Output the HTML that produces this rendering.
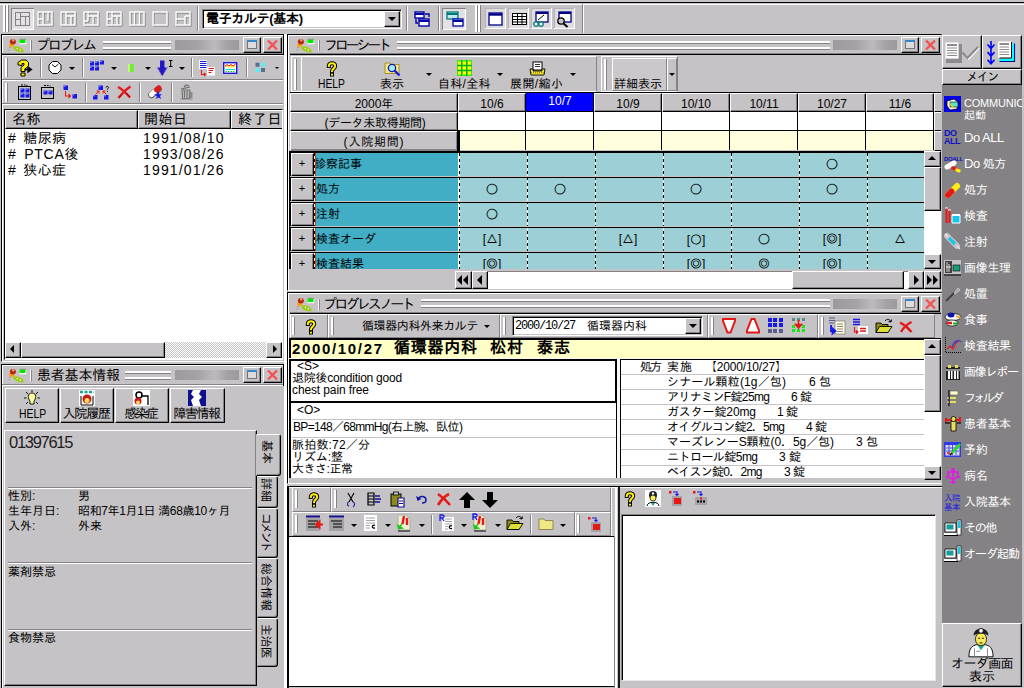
<!DOCTYPE html>
<html lang="ja">
<head>
<meta charset="utf-8">
<title>電子カルテ(基本)</title>
<style>
html,body{margin:0;padding:0;}
body{width:1024px;height:688px;overflow:hidden;background:#c6c3c6;position:relative;
 font-family:"Liberation Sans","IPAGothic",sans-serif;font-size:13px;color:#000;line-height:1;}
div,span{box-sizing:border-box;}
.a{position:absolute;}
.t{position:absolute;white-space:nowrap;}
.g{background:#c6c3c6;}
.rs{box-shadow:inset 1px 1px #fff,inset -1px -1px #848284;}
.sk{box-shadow:inset 1px 1px #848284,inset -1px -1px #fff;}
.btn{border:1px solid;border-color:#fff #000 #000 #fff;box-shadow:inset -1px -1px #848284;background:#c6c3c6;}
.hd{border:1px solid;border-color:#fff #000 #000 #fff;box-shadow:inset -1px -1px #848284;background:#c6c3c6;}
.grip{width:3px;border-left:2px solid #fff;border-right:1px solid #848284;}
.sep{width:2px;border-left:1px solid #848284;border-right:1px solid #fff;}
.hl{height:2px;border-top:1px solid #848284;border-bottom:1px solid #fff;}
.dd{width:0;height:0;border-left:3px solid transparent;border-right:3px solid transparent;border-top:3px solid #000;}
.w{background:#fff;}
.k{background:#000;}
svg{position:absolute;overflow:visible;}
</style>
</head>
<body>
<!-- ===== frame top ===== -->
<div class="a k" style="left:0;top:2px;width:1024px;height:1px"></div>
<div class="a w" style="left:0;top:4px;width:1024px;height:1px"></div>

<!-- ===== top toolbar ===== -->
<div class="a" style="left:0;top:4px;width:583px;height:29px;border-right:1px solid #848284;"></div>
<div class="a w" style="left:583px;top:4px;width:1px;height:29px"></div>
<div class="a grip" style="left:3px;top:5px;height:27px"></div>
<div class="a grip" style="left:6px;top:5px;height:27px"></div>
<div class="a sk" style="left:11px;top:8px;width:23px;height:22px;background:#e3e1e3;"></div>
<svg style="left:14px;top:11px" width="176" height="16" viewBox="0 0 176 16" fill="none" stroke="#848284" stroke-width="1">
 <g><rect x="1.5" y="1.5" width="14" height="13"/><path d="M6.5 1.5v13M11.5 5v9M1.5 8.5h5M6.5 5.5h9"/></g>
 <g stroke="#848284" stroke-width="1.2" transform="translate(1,1)">
 <g transform="translate(23,0)"><rect x="1" y="1" width="14" height="13"/><path d="M6 1v13M11 1v9M1 8h5"/></g>
 <g transform="translate(46,0)"><rect x="1" y="1" width="14" height="13"/><path d="M6 1v13M11 5v9M6 5h9"/></g>
 <g transform="translate(69,0)"><rect x="1" y="1" width="14" height="13"/><path d="M5 1v9M10 5v9M5 5h10M1 10h4"/></g>
 <g transform="translate(92,0)"><rect x="1" y="1" width="14" height="13"/><path d="M6 1v13M11 5v9M1 8h5M6 5h9"/></g>
 <g transform="translate(115,0)"><rect x="1" y="1" width="14" height="13"/><path d="M5.5 1v13M10.5 1v13"/></g>
 <g transform="translate(138,0)"><rect x="1" y="1" width="14" height="13"/></g>
 <g transform="translate(161,0)"><rect x="1" y="1" width="14" height="13"/><path d="M1 8h9M10 5v9M10 5h5"/></g>
 </g>
 <g stroke="#fff" stroke-width="1.400">
 <g transform="translate(23,0)"><rect x="1" y="1" width="14" height="13"/><path d="M6 1v13M11 1v9M1 8h5"/></g>
 <g transform="translate(46,0)"><rect x="1" y="1" width="14" height="13"/><path d="M6 1v13M11 5v9M6 5h9"/></g>
 <g transform="translate(69,0)"><rect x="1" y="1" width="14" height="13"/><path d="M5 1v9M10 5v9M5 5h10M1 10h4"/></g>
 <g transform="translate(92,0)"><rect x="1" y="1" width="14" height="13"/><path d="M6 1v13M11 5v9M1 8h5M6 5h9"/></g>
 <g transform="translate(115,0)"><rect x="1" y="1" width="14" height="13"/><path d="M5.5 1v13M10.5 1v13"/></g>
 <g transform="translate(138,0)"><rect x="1" y="1" width="14" height="13"/></g>
 <g transform="translate(161,0)"><rect x="1" y="1" width="14" height="13"/><path d="M1 8h9M10 5v9M10 5h5"/></g>
 </g>
</svg>
<div class="a sep" style="left:197px;top:6px;height:25px"></div>
<!-- combo -->
<div class="a" style="left:202px;top:9px;width:200px;height:20px;background:#fff;border:1px solid;border-color:#848284 #fff #fff #848284;box-shadow:inset 1px 1px #000,inset -1px -1px #c6c3c6;"></div>
<span class="t" style="left:206px;top:12px;font-size:13px;font-weight:bold;letter-spacing:-0.33px">電子カルテ(基本)</span>
<div class="a btn" style="left:384px;top:11px;width:16px;height:16px"></div>
<div class="a dd" style="left:388px;top:17px;border-left-width:4px;border-right-width:4px;border-top-width:4px"></div>
<div class="a sep" style="left:406px;top:6px;height:25px"></div>
<svg style="left:413px;top:10px" width="18" height="18" viewBox="0 0 18 18" fill="#fff" stroke="#0000a5" stroke-width="1.4">
 <rect x="2" y="2" width="9" height="6"/><rect x="6" y="9" width="10" height="7"/><path d="M2 4h9M6 11h10" stroke-width="2"/><path d="M12 4h4v3M3 9v4h2" fill="none"/>
</svg>
<div class="a sep" style="left:438px;top:6px;height:25px"></div>
<div class="a sk" style="left:442px;top:8px;width:24px;height:22px;background:#e3e1e3;"></div>
<svg style="left:446px;top:11px" width="18" height="16" viewBox="0 0 18 16" fill="#c6e7e7" stroke="#007b7b" stroke-width="1.3">
 <rect x="1" y="1" width="11" height="7"/><rect x="7" y="8" width="10" height="7" stroke="#0000a5" fill="#fff"/><path d="M1 3h11" stroke-width="2"/><path d="M7 10h10" stroke="#0000a5" stroke-width="2"/>
</svg>
<div class="a grip" style="left:475px;top:5px;height:27px"></div>
<div class="a grip" style="left:478px;top:5px;height:27px"></div>
<div class="a" style="left:485px;top:8px;width:21px;height:21px;background:#e0dde0;box-shadow:inset -1px -1px #fff,inset 1px 1px #b5b2b5"></div>
<div class="a" style="left:508px;top:8px;width:21px;height:21px;background:#e0dde0;box-shadow:inset -1px -1px #fff,inset 1px 1px #b5b2b5"></div>
<div class="a" style="left:531px;top:8px;width:21px;height:21px;background:#e0dde0;box-shadow:inset -1px -1px #fff,inset 1px 1px #b5b2b5"></div>
<div class="a" style="left:554px;top:8px;width:21px;height:21px;background:#e0dde0;box-shadow:inset -1px -1px #fff,inset 1px 1px #b5b2b5"></div>
<svg style="left:484px;top:8px" width="92" height="22" viewBox="0 0 92 22" fill="#fff" stroke="#000084" stroke-width="1.3">
 <rect x="5" y="5" width="13" height="12"/><path d="M5 6.5h13" stroke-width="2.4"/>
 <g stroke="#000" stroke-width="1"><rect x="28.500" y="5.500" width="14" height="11"/><path d="M28.500 8.500h14M28.500 11.500h14M28.500 14h14M33.500 5.500v11M38 5.500v11"/></g>
 <g transform="translate(46,0)"><rect x="6" y="4" width="12" height="10"/><path d="M6 5h12" stroke-width="2"/><circle cx="6" cy="16" r="2.200" stroke="#007b7b"/><circle cx="11" cy="16" r="2.200" stroke="#007b7b"/><path d="M8 12l6-5" stroke="#000" stroke-width="1"/></g>
 <g transform="translate(69,0)"><rect x="6" y="4" width="12" height="10"/><path d="M6 5h12" stroke-width="2"/><circle cx="8" cy="13" r="3.200" stroke="#000" fill="#c6c3c6"/><path d="M10.500 15.500l4 3.500" stroke="#000" stroke-width="2"/></g>
</svg>
<!-- ===== problem panel ===== -->
<div class="a" style="left:1px;top:34px;width:283px;height:328px;border:1px solid;border-color:#000 #c6c3c6 #fff #000;box-shadow:inset 1px 1px #fff;"></div><div class="a k" style="left:283px;top:34px;width:1px;height:21px"></div><div class="a w" style="left:284px;top:34px;width:3px;height:654px"></div>
<div class="a" style="left:2px;top:53px;width:281px;height:2px;border-top:1px solid #848284;border-bottom:1px solid #000;"></div>
<!-- title -->
<svg style="left:8px;top:37px" width="20" height="17" viewBox="8 37 20 17"><rect x="19.500" y="39.500" width="6.800" height="4.700" fill="#fff"/><rect x="19.500" y="39.500" width="6" height="3.500" fill="#00e700"/><path d="M19.500 39.300h6.500" stroke="#737573" stroke-width=".7"/><ellipse cx="11.600" cy="45" rx="2.500" ry="2.100" fill="#ff9c00"/><ellipse cx="12.900" cy="41.700" rx="3" ry="2.700" fill="#b52810"/><circle cx="13.200" cy="40.200" r="1.200" fill="#e7a56b"/><ellipse cx="18.500" cy="49.300" rx="5.600" ry="2.500" transform="rotate(22 18.500 49.300)" fill="#9cce18"/><circle cx="17.300" cy="48.600" r=".7" fill="#fff"/><circle cx="20.300" cy="49.900" r=".7" fill="#fff"/><path d="M10 47.300l-1.500 5" stroke="#fff" stroke-width="1"/><path d="M10 47.300l-1.500 5" stroke="#424142" stroke-width="1" stroke-dasharray="1.200 1.200"/></svg>
<div class="a w" style="left:30px;top:40px;width:1px;height:11px;"></div><div class="a" style="left:31px;top:40px;width:1px;height:11px;background:#848284"></div>
<span class="t" style="left:36px;top:38px;font-size:14px;letter-spacing:-2.25px">プロブレム</span>
<div class="a" style="left:103px;top:41px;width:68px;height:9px;background:linear-gradient(#fff 0,#fff 2px,#848284 2px,#848284 3px,#c6c3c6 3px,#c6c3c6 6px,#fff 6px,#fff 8px,#848284 8px,#848284 9px);"></div>
<div class="a" style="left:175px;top:40px;width:64px;height:10px;background:linear-gradient(90deg,#9c9a9c 0,#a5a2a5 35%,#bdbabd 62%,#a5a2a5 82%,#9c9a9c 100%);"></div>
<div class="a btn" style="left:243px;top:37px;width:18px;height:16px"></div>
<div class="a" style="left:247px;top:40px;width:10px;height:9px;border:1px solid #737573;border-top:2px solid #3186ce;background:#dedbde"></div>
<div class="a btn" style="left:263px;top:37px;width:19px;height:16px"></div>
<svg style="left:266px;top:39px" width="13" height="12" viewBox="0 0 13 12"><path d="M2 1.500l9 9M11 1.500l-9 9" stroke="#f75152" stroke-width="2.400"/></svg>
<!-- toolbar 1 -->
<div class="a" style="left:2px;top:55px;width:281px;height:25px;border-top:1px solid #fff;border-bottom:1px solid #848284;"></div>
<div class="a" style="left:2px;top:80px;width:281px;height:24px;border-top:1px solid #fff;border-bottom:1px solid #848284;"></div><div class="a w" style="left:2px;top:104px;width:281px;height:1px"></div>
<div class="a grip" style="left:5px;top:58px;height:19px"></div>
<div class="a grip" style="left:5px;top:83px;height:19px"></div>
<div class="a sep" style="left:40px;top:58px;height:19px"></div>
<div class="a sep" style="left:82px;top:58px;height:19px"></div>
<div class="a sep" style="left:191px;top:58px;height:19px"></div>
<div class="a sep" style="left:246px;top:58px;height:19px"></div>
<div class="a sep" style="left:85px;top:83px;height:19px"></div>
<div class="a sep" style="left:139px;top:83px;height:19px"></div>
<div class="a sep" style="left:171px;top:83px;height:19px"></div>
<div class="a dd" style="left:69px;top:67px"></div>
<div class="a dd" style="left:111px;top:67px"></div>
<div class="a dd" style="left:145px;top:67px"></div>
<div class="a dd" style="left:179px;top:67px"></div>
<div class="a dd" style="left:275px;top:67px;border-left-width:2px;border-right-width:2px;border-top-width:2px"></div>
<svg style="left:0;top:55px" width="284" height="50" viewBox="0 55 284 50">
<path d="M18 65v-2.500l3.500-2.500h4.500l2.500 2.500v3.500l-3.500 3v2.500h-4v-4l3-2.500v-1.500h-2v2zM21 73h4v3h-4z" fill="#ffef00" stroke="#000" stroke-width="1" stroke-linejoin="round"/>
<path d="M24.500 69.500h5M28 67l3.500 2.500-3.500 2.500z" stroke="#000" stroke-width="1.300" fill="#000"/>
<path d="M52.500 61.500h5l3.500 3.500v5l-3.500 3.500h-5l-3.500-3.500v-5z" fill="#fff" stroke="#000" stroke-width="1"/><path d="M52 64.500l3 2.500 3.500-3" stroke="#000" stroke-width=".9" fill="none"/><path d="M54 73.500h3" stroke="#000"/>
<rect x="90" y="61.5" width="4" height="4" fill="#1818e7"/><rect x="90" y="61.5" width="2" height="1.500" fill="#6b79f7"/><rect x="95" y="61.5" width="4" height="4" fill="#1818e7"/><rect x="95" y="61.5" width="2" height="1.500" fill="#6b79f7"/><rect x="100" y="60.5" width="4" height="4" fill="#1818e7"/><rect x="100" y="60.5" width="2" height="1.500" fill="#6b79f7"/><rect x="90" y="66.5" width="4" height="4" fill="#1818e7"/><rect x="90" y="66.5" width="2" height="1.500" fill="#6b79f7"/><rect x="95" y="66.5" width="4" height="4" fill="#1818e7"/><rect x="95" y="66.5" width="2" height="1.500" fill="#6b79f7"/>
<rect x="128" y="64" width="6" height="8" fill="#7be739"/><rect x="128" y="64" width="2" height="8" fill="#bdf77b"/>
<path d="M160 60.500h4.500v7h2.500l-4.750 8.500-4.750-8.500h2.500z" fill="#2118c6"/><path d="M157 67.500l5 8.500M167.500 67.500l-5 8.500" stroke="#7349b5" stroke-width="1" stroke-dasharray="1 1"/><path d="M169 60.500h3.500M170.700 60.500v6M169 66.500h3.500" stroke="#000" stroke-width="1"/>
<rect x="199" y="60" width="8" height="9" fill="#fff"/><path d="M200 61.500h6.500M200 63.500h6.500M200 65.500h6.500M200 67.500h6.500" stroke="#1818e7" stroke-width="1.100"/><rect x="207" y="67" width="8" height="8.500" fill="#fff"/><path d="M208.500 68.500h5.500M208.500 70.500h4.500M208.500 72.500h3" stroke="#e71818" stroke-width="1.100"/><path d="M201.500 70v4.500h4M204 73l1.500 1.500-1.500 1.500" stroke="#e71818" stroke-width="1.100" fill="none"/>
<rect x="223.700" y="62.700" width="13" height="10.600" fill="#fff" stroke="#1818e7" stroke-width="1.400"/><path d="M225 66l2-1.500 2 1.500 2-1.500 2 1.500 2.500-2v3.500h-10.500z" fill="#ffe75a"/><path d="M225 66l2-1.500 2 1.500 2-1.500 2 1.500 2.500-2" stroke="#e71818" fill="none" stroke-width="1"/><path d="M225.500 69.500h9.500" stroke="#18d6d6" stroke-width="1.200"/><path d="M225.500 71.500h9.500" stroke="#18c618" stroke-width="1" stroke-dasharray="1.500 1"/>
<rect x="255.500" y="62.700" width="4" height="4" fill="#5a6d8c"/><rect x="261" y="62.700" width="4" height="4" fill="#5aeff7"/><rect x="255.500" y="68" width="4" height="4" fill="#5aeff7"/><rect x="261" y="68" width="4" height="4" fill="#5a6d8c"/>
<rect x="18.500" y="86.500" width="12" height="13" fill="none" stroke="#000" stroke-width="1"/><path d="M21 85h2M24 85h1.500M26.500 85.500h1" stroke="#000" stroke-width="1.200"/><rect x="20.5" y="88.5" width="4" height="4" fill="#1818e7"/><rect x="20.5" y="88.5" width="2" height="1.500" fill="#6b79f7"/><rect x="25.5" y="88.5" width="4" height="4" fill="#1818e7"/><rect x="25.5" y="88.5" width="2" height="1.500" fill="#6b79f7"/><rect x="20.5" y="93.5" width="4" height="4" fill="#1818e7"/><rect x="20.5" y="93.5" width="2" height="1.500" fill="#6b79f7"/><rect x="25.5" y="93.5" width="4" height="4" fill="#1818e7"/><rect x="25.5" y="93.5" width="2" height="1.500" fill="#6b79f7"/>
<rect x="41.500" y="87.500" width="12" height="11" fill="none" stroke="#000" stroke-width="1"/><path d="M44 85.500h2M47 85.500h1.500M49.500 86h1" stroke="#000" stroke-width="1.200"/><rect x="43.5" y="90.5" width="4" height="4" fill="#1818e7"/><rect x="43.5" y="90.5" width="2" height="1.500" fill="#6b79f7"/><rect x="48.5" y="90.5" width="4" height="4" fill="#1818e7"/><rect x="48.5" y="90.5" width="2" height="1.500" fill="#6b79f7"/>
<rect x="63.5" y="85.5" width="4.5" height="4.5" fill="#1818e7"/><rect x="63.5" y="85.5" width="2" height="1.500" fill="#6b79f7"/><rect x="72.5" y="94" width="4.5" height="4.5" fill="#1818e7"/><rect x="72.5" y="94" width="2" height="1.500" fill="#6b79f7"/><path d="M65.500 91v5h5M68.500 94l2 2-2 2" stroke="#e71818" stroke-width="1.100" fill="none"/>
<rect x="98.5" y="85.5" width="4.5" height="4.5" fill="#1818e7"/><rect x="98.5" y="85.5" width="2" height="1.500" fill="#6b79f7"/><rect x="93" y="95" width="4.5" height="4.5" fill="#1818e7"/><rect x="93" y="95" width="2" height="1.500" fill="#6b79f7"/><rect x="104" y="95" width="4.5" height="4.5" fill="#1818e7"/><rect x="104" y="95" width="2" height="1.500" fill="#6b79f7"/><path d="M95.500 94.500l3.500-3.500M96.500 91h2.500v2.500M106.500 94.500l-3.500-3.500M105.500 91h-2.500v2.500" stroke="#e71818" stroke-width="1" fill="none"/><path d="M106 87.500c0-1.500 2.500-1.500 2.500 0c0 1-1.200 1-1.200 2.200M107.300 91v1" stroke="#000" stroke-width=".9" fill="none"/>
<path d="M118 87c3 1.500 8 6 12 10.500M130.500 86.500c-4 2.500-8 6.500-12 11.500" stroke="#e71818" stroke-width="2.400" fill="none"/><path d="M119 97.500l3-3M126 93l4 4" stroke="#7b0000" stroke-width=".8"/>
<path d="M151.500 95l7-6" stroke="#5a5d5a" stroke-width="6.500" stroke-linecap="round"/><path d="M151.500 94.500l3.500-3" stroke="#fff" stroke-width="5" stroke-linecap="round"/><path d="M156.500 90l2.500-2" stroke="#e71818" stroke-width="5" stroke-linecap="round"/><path d="M158 91l-1.500 3.500-2.500-.5 3 2.500-1.500 2.500 3-1.500 2.500 1.500-1-3 2-2-2.500.5z" fill="#1818e7"/>
<path d="M182 90h8l-.500 8.500h-7z" fill="#b5b2b5" stroke="#6b6d6b" stroke-width="1"/><path d="M181 89l9-2M184 87l2-2 3 1" stroke="#6b6d6b" stroke-width="1.200" fill="none"/><path d="M184.500 91v6.500M187 91v6.500" stroke="#6b6d6b" stroke-width=".9"/><path d="M190 92h2.500v6h-2.500z" fill="#8c8a8c"/><path d="M180.500 99h12" stroke="#848284"/>
</svg>
<!-- list -->
<div class="a" style="left:4px;top:109px;width:279px;height:251px;background:#fff;border:1px solid;border-color:#000 #fff #fff #000;"></div>
<div class="a hd" style="left:5px;top:110px;width:133px;height:19px"></div>
<div class="a hd" style="left:138px;top:110px;width:93px;height:19px"></div>
<div class="a hd" style="left:231px;top:110px;width:51px;height:19px;border-right:0;box-shadow:none"></div>
<span class="t" style="left:12px;top:112px;font-size:14px;letter-spacing:0.5px">名称</span>
<span class="t" style="left:144px;top:112px;font-size:14px;letter-spacing:0.5px">開始日</span>
<span class="t" style="left:238px;top:112px;font-size:14px;letter-spacing:0.75px">終了日</span>
<span class="t" style="left:8px;top:131px;font-size:14px;word-spacing:3px;letter-spacing:0.33px"># 糖尿病</span>
<span class="t" style="left:8px;top:147px;font-size:14px;word-spacing:3px;letter-spacing:0.75px"># PTCA後</span>
<span class="t" style="left:8px;top:163px;font-size:14px;word-spacing:3px;letter-spacing:0.33px"># 狭心症</span>
<span class="t" style="left:143px;top:131px;font-size:14px;letter-spacing:1.16px">1991/08/10</span>
<span class="t" style="left:143px;top:147px;font-size:14px;letter-spacing:1.16px">1993/08/26</span>
<span class="t" style="left:143px;top:163px;font-size:14px;letter-spacing:1.16px">1991/01/26</span>
<!-- hscroll -->
<div class="a" style="left:5px;top:342px;width:277px;height:16px;background:repeating-conic-gradient(#fff 0 25%,#c6c3c6 0 50%) 0 0/2px 2px;"></div>
<div class="a btn" style="left:5px;top:342px;width:16px;height:16px"></div>
<div class="a btn" style="left:21px;top:342px;width:144px;height:16px"></div>
<div class="a btn" style="left:266px;top:342px;width:16px;height:16px"></div>
<div class="a" style="left:10px;top:345px;width:0;height:0;border-top:4px solid transparent;border-bottom:4px solid transparent;border-right:4px solid #000"></div>
<div class="a" style="left:273px;top:345px;width:0;height:0;border-top:4px solid transparent;border-bottom:4px solid transparent;border-left:4px solid #000"></div>
<!-- ===== patient panel ===== -->
<div class="a" style="left:1px;top:364px;width:283px;height:326px;border:1px solid;border-color:#000 #c6c3c6 #fff #000;box-shadow:inset 1px 1px #fff;"></div><div class="a k" style="left:283px;top:364px;width:1px;height:22px"></div>
<div class="a" style="left:2px;top:384px;width:281px;height:2px;border-top:1px solid #848284;border-bottom:1px solid #fff;"></div>
<svg style="left:8px;top:367px" width="20" height="17" viewBox="8 37 20 17"><rect x="19.500" y="39.500" width="6.800" height="4.700" fill="#fff"/><rect x="19.500" y="39.500" width="6" height="3.500" fill="#00e700"/><path d="M19.500 39.300h6.500" stroke="#737573" stroke-width=".7"/><ellipse cx="11.600" cy="45" rx="2.500" ry="2.100" fill="#ff9c00"/><ellipse cx="12.900" cy="41.700" rx="3" ry="2.700" fill="#b52810"/><circle cx="13.200" cy="40.200" r="1.200" fill="#e7a56b"/><ellipse cx="18.500" cy="49.300" rx="5.600" ry="2.500" transform="rotate(22 18.500 49.300)" fill="#9cce18"/><circle cx="17.300" cy="48.600" r=".7" fill="#fff"/><circle cx="20.300" cy="49.900" r=".7" fill="#fff"/><path d="M10 47.300l-1.500 5" stroke="#fff" stroke-width="1"/><path d="M10 47.300l-1.500 5" stroke="#424142" stroke-width="1" stroke-dasharray="1.200 1.200"/></svg>
<div class="a w" style="left:30px;top:370px;width:1px;height:11px;"></div><div class="a" style="left:31px;top:370px;width:1px;height:11px;background:#848284"></div>
<span class="t" style="left:37px;top:368px;font-size:14px;letter-spacing:-0.2px">患者基本情報</span>
<div class="a" style="left:125px;top:371px;width:46px;height:9px;background:linear-gradient(#fff 0,#fff 2px,#848284 2px,#848284 3px,#c6c3c6 3px,#c6c3c6 6px,#fff 6px,#fff 8px,#848284 8px,#848284 9px);"></div>
<div class="a" style="left:175px;top:370px;width:64px;height:10px;background:linear-gradient(90deg,#9c9a9c 0,#a5a2a5 35%,#bdbabd 62%,#a5a2a5 82%,#9c9a9c 100%);"></div>
<div class="a btn" style="left:243px;top:367px;width:18px;height:16px"></div>
<div class="a" style="left:247px;top:370px;width:10px;height:9px;border:1px solid #737573;border-top:2px solid #3186ce;background:#dedbde"></div>
<div class="a btn" style="left:263px;top:367px;width:19px;height:16px"></div>
<svg style="left:266px;top:369px" width="13" height="12" viewBox="0 0 13 12"><path d="M2 1.500l9 9M11 1.500l-9 9" stroke="#f75152" stroke-width="2.400"/></svg>
<!-- 4 buttons -->
<div class="a btn" style="left:5px;top:388px;width:54px;height:35px"></div>
<div class="a btn" style="left:60px;top:388px;width:54px;height:35px"></div>
<div class="a btn" style="left:115px;top:388px;width:54px;height:35px"></div>
<div class="a btn" style="left:170px;top:388px;width:55px;height:35px"></div>
<span class="t" style="left:18.600px;top:407px;font-size:13px;transform:scaleX(.8);transform-origin:0 0">HELP</span>
<span class="t" style="left:62.4px;top:407px;font-size:13px;letter-spacing:-1.13px">入院履歴</span>
<span class="t" style="left:124.3px;top:407px;font-size:13px;letter-spacing:-2.3px">感染症</span>
<span class="t" style="left:173.5px;top:407px;font-size:13px;letter-spacing:-1.5px">障害情報</span>
<svg style="left:24px;top:390px" width="16" height="17" viewBox="0 0 16 17"><path d="M8 3c-5 0-4 6-2 8v3h4v-3c2-2 3-8-2-8z" fill="#ffff9c" stroke="#000" stroke-width=".9"/><path d="M8 0v2M2 2l2 2M14 2l-2 2M0 8h2.500M16 8h-2.500M2 14l2-2M14 14l-2-2" stroke="#000" stroke-width=".9"/></svg>
<svg style="left:79px;top:390px" width="16" height="16" viewBox="0 0 16 16"><rect x="0" y="0" width="16" height="16" fill="#fff"/><path d="M1 2h14" stroke="#18a58c" stroke-width="2.500" stroke-dasharray="3 1.500"/><circle cx="8" cy="9" r="4.500" fill="#c61818"/><circle cx="8" cy="10.500" r="2.500" fill="#ffde5a"/><path d="M2 6v9M14 6v9M2 15h12" stroke="#000" fill="none"/></svg>
<svg style="left:133px;top:390px" width="18" height="16" viewBox="0 0 18 16"><rect x="0" y="0" width="17" height="16" fill="#fff"/><circle cx="6" cy="5" r="3" fill="none" stroke="#000" stroke-width="1.500"/><path d="M8 6h7v9" stroke="#000" stroke-width="1.300" fill="none"/><circle cx="5" cy="11" r="3.500" fill="#c61818"/><circle cx="5" cy="12.500" r="2" fill="#ffde5a"/></svg>
<svg style="left:188px;top:390px" width="18" height="16" viewBox="0 0 18 16"><path d="M0 0h18v16h-18z" fill="#fff"/><path d="M0 0h5l-2 4 3 3-3 3 2 6h-5zM18 0h-5l-2 4 3 3-3 3 2 6h5z" fill="#10108c"/></svg>
<!-- content -->
<div class="a" style="left:4px;top:430px;width:253px;height:256px;border:1px solid;border-color:#fff #000 #000 #fff;box-shadow:inset -1px -1px #848284;"></div>
<span class="t" style="left:9px;top:434px;font-size:16.500px;letter-spacing:-1.3px;color:#212021">01397615</span>
<div class="a hl" style="left:8px;top:487px;width:244px"></div>
<span class="t" style="left:8px;top:490px;font-size:12px;">性別:</span><span class="t" style="left:78px;top:490px;font-size:12px;">男</span>
<span class="t" style="left:8px;top:505px;font-size:12px;">生年月日:</span><span class="t" style="left:78px;top:505px;font-size:12px;letter-spacing:-.35px">昭和7年1月1日 満68歳10ヶ月</span>
<span class="t" style="left:8px;top:520px;font-size:12px;">入外:</span><span class="t" style="left:78px;top:520px;font-size:12px;">外来</span>
<div class="a hl" style="left:8px;top:562px;width:244px"></div>
<span class="t" style="left:8px;top:566px;font-size:12px;">薬剤禁忌</span>
<div class="a hl" style="left:8px;top:629px;width:244px"></div>
<span class="t" style="left:8px;top:632px;font-size:12px;">食物禁忌</span>
<!-- tabs -->
<div class="a" style="left:256px;top:434px;width:25px;height:42px;background:#c6c3c6;border:1px solid;border-color:#fff #000 #000 #c6c3c6;border-radius:0 3px 3px 0;box-shadow:inset -1px -1px #848284"></div>
<div class="a" style="left:257px;top:476px;width:21px;height:32px;border:1px solid;border-color:#fff #000 #000 transparent;border-radius:0 3px 3px 0;box-shadow:inset -1px -1px #848284"></div>
<div class="a" style="left:257px;top:508px;width:21px;height:50px;border:1px solid;border-color:#fff #000 #000 transparent;border-radius:0 3px 3px 0;box-shadow:inset -1px -1px #848284"></div>
<div class="a" style="left:257px;top:558px;width:21px;height:60px;border:1px solid;border-color:#fff #000 #000 transparent;border-radius:0 3px 3px 0;box-shadow:inset -1px -1px #848284"></div>
<div class="a" style="left:257px;top:618px;width:21px;height:49px;border:1px solid;border-color:#fff #000 #000 transparent;border-radius:0 3px 3px 0;box-shadow:inset -1px -1px #848284"></div>
<span class="t" style="left:261px;top:440px;font-size:12px;writing-mode:vertical-rl;text-orientation:sideways;letter-spacing:0px">基本</span>
<span class="t" style="left:260px;top:478px;font-size:12px;writing-mode:vertical-rl;text-orientation:sideways;letter-spacing:0px">詳細</span>
<span class="t" style="left:260px;top:513px;font-size:12px;writing-mode:vertical-rl;text-orientation:sideways;letter-spacing:-2.8px">コメント</span>
<span class="t" style="left:260px;top:563px;font-size:12px;writing-mode:vertical-rl;text-orientation:sideways;letter-spacing:0px">総合情報</span>
<span class="t" style="left:260px;top:624px;font-size:12px;writing-mode:vertical-rl;text-orientation:sideways;letter-spacing:-0.6px">主治医</span>
<!-- ===== flow sheet panel ===== -->
<div class="a" style="left:287px;top:34px;width:655px;height:257px;border:1px solid;border-color:#000 #c6c3c6 #fff #000;box-shadow:inset 1px 1px #fff;"></div>
<div class="a" style="left:290px;top:53px;width:651px;height:2px;border-top:1px solid #848284;border-bottom:1px solid #000;"></div>
<svg style="left:296px;top:37px" width="20" height="17" viewBox="8 37 20 17"><rect x="19.500" y="39.500" width="6.800" height="4.700" fill="#fff"/><rect x="19.500" y="39.500" width="6" height="3.500" fill="#00e700"/><path d="M19.500 39.300h6.500" stroke="#737573" stroke-width=".7"/><ellipse cx="11.600" cy="45" rx="2.500" ry="2.100" fill="#ff9c00"/><ellipse cx="12.900" cy="41.700" rx="3" ry="2.700" fill="#b52810"/><circle cx="13.200" cy="40.200" r="1.200" fill="#e7a56b"/><ellipse cx="18.500" cy="49.300" rx="5.600" ry="2.500" transform="rotate(22 18.500 49.300)" fill="#9cce18"/><circle cx="17.300" cy="48.600" r=".7" fill="#fff"/><circle cx="20.300" cy="49.900" r=".7" fill="#fff"/><path d="M10 47.300l-1.500 5" stroke="#fff" stroke-width="1"/><path d="M10 47.300l-1.500 5" stroke="#424142" stroke-width="1" stroke-dasharray="1.200 1.200"/></svg>
<div class="a w" style="left:318px;top:40px;width:1px;height:11px;"></div><div class="a" style="left:319px;top:40px;width:1px;height:11px;background:#848284"></div>
<span class="t" style="left:324px;top:38px;font-size:14px;letter-spacing:-3.2px">フローシート</span>
<div class="a" style="left:397px;top:41px;width:433px;height:9px;background:linear-gradient(#fff 0,#fff 2px,#848284 2px,#848284 3px,#c6c3c6 3px,#c6c3c6 6px,#fff 6px,#fff 8px,#848284 8px,#848284 9px);"></div>
<div class="a" style="left:833px;top:40px;width:64px;height:10px;background:linear-gradient(90deg,#9c9a9c 0,#a5a2a5 35%,#bdbabd 62%,#a5a2a5 82%,#9c9a9c 100%);"></div>
<div class="a btn" style="left:901px;top:37px;width:18px;height:16px"></div>
<div class="a" style="left:905px;top:40px;width:10px;height:9px;border:1px solid #737573;border-top:2px solid #3186ce;background:#dedbde"></div>
<div class="a btn" style="left:921px;top:37px;width:19px;height:16px"></div>
<svg style="left:924px;top:39px" width="13" height="12" viewBox="0 0 13 12"><path d="M2 1.500l9 9M11 1.500l-9 9" stroke="#f75152" stroke-width="2.400"/></svg>
<div class="a" style="left:291px;top:56px;width:306px;height:36px;border:1px solid;border-color:#fff #848284 #fff #fff;"></div>
<div class="a" style="left:601px;top:56px;width:77px;height:36px;border:1px solid;border-color:#fff #848284 #fff #fff;"></div><div class="a k" style="left:290px;top:92px;width:651px;height:1px"></div>
<div class="a grip" style="left:294px;top:59px;height:31px"></div><div class="a w" style="left:301px;top:57px;width:1px;height:34px"></div>
<div class="a grip" style="left:604px;top:59px;height:31px"></div>
<div class="a" style="left:612px;top:58px;width:55px;height:33px;background:#cbc8cb;border:1px solid;border-color:#fff #848284 #848284 #fff"></div><div class="a" style="left:667px;top:58px;width:10px;height:33px;border:1px solid;border-color:#fff #848284 #848284 #fff"></div>
<svg style="left:326px;top:61px" width="12" height="16" viewBox="0 0 12 16"><path d="M2.800 5c0-3.800 6.400-3.800 6.400 0c0 2.600-3.200 2.600-3.200 5.200" stroke="#000" stroke-width="4" fill="none" stroke-linecap="square"/><path d="M2.800 5c0-3.800 6.400-3.800 6.400 0c0 2.600-3.200 2.600-3.200 5.200" stroke="#ffef00" stroke-width="2" fill="none" stroke-linecap="square"/><rect x="4" y="11.800" width="4" height="3.700" fill="#000"/><rect x="5" y="12.700" width="2" height="1.900" fill="#ffef00"/></svg>
<span class="t" style="left:318px;top:78px;font-size:12px;transform:scaleX(.86);transform-origin:0 0">HELP</span>
<svg style="left:384px;top:60px" width="18" height="17" viewBox="0 0 18 17"><path d="M1 3h5l1 1.500h8v9h-14z" fill="#f7e784" stroke="#9c8a18" stroke-width=".9"/><circle cx="8" cy="8" r="3.600" fill="#9cefff" stroke="#1818a5" stroke-width="1.300"/><path d="M10.500 10.500l5 5" stroke="#1818e7" stroke-width="2.400"/></svg>
<span class="t" style="left:380px;top:78px;font-size:12px;">表示</span>
<div class="a dd" style="left:426px;top:73px"></div>
<svg style="left:457px;top:60px" width="15" height="16" viewBox="0 0 15 16"><rect width="15" height="16" fill="#39e718"/><path d="M4.500 0v16M9.500 0v16M0 5.500h15M0 10.500h15" stroke="#18a518" stroke-width="1"/><rect x="1" y="1.5" width="3" height="3" fill="#ffff00"/><rect x="6" y="1.5" width="3" height="3" fill="#ffff00"/><rect x="11" y="1.5" width="3" height="3" fill="#ffff00"/><rect x="1" y="6.5" width="3" height="3" fill="#ffff00"/><rect x="6" y="6.5" width="3" height="3" fill="#ffff00"/><rect x="11" y="6.5" width="3" height="3" fill="#ffff00"/><rect x="1" y="11.5" width="3" height="3" fill="#ffff00"/><rect x="6" y="11.5" width="3" height="3" fill="#ffff00"/><rect x="11" y="11.5" width="3" height="3" fill="#ffff00"/></svg>
<span class="t" style="left:438px;top:78px;font-size:12px;letter-spacing:0.29px">自科/全科</span>
<div class="a dd" style="left:497px;top:73px"></div>
<svg style="left:529px;top:61px" width="17" height="15" viewBox="0 0 17 15"><rect x="4" y="1" width="9" height="8" fill="#fff" stroke="#000"/><path d="M6 3.500h5M6 5.500h5" stroke="#000" stroke-width=".8"/><path d="M1 8h3v2h9v-2h3l-1 6h-13z" fill="#f7e739" stroke="#000" stroke-width=".9"/><path d="M2 11.500h13M2 13h13" stroke="#9c8a18" stroke-dasharray="1 1"/></svg>
<span class="t" style="left:510px;top:78px;font-size:12px;letter-spacing:0.41px">展開/縮小</span>
<div class="a dd" style="left:570px;top:73px"></div>
<span class="t" style="left:614px;top:78px;font-size:12px;">詳細表示</span>
<div class="a dd" style="left:669px;top:73px"></div>
<div class="a hd" style="left:290px;top:93px;width:168px;height:19px"></div>
<span class="t" style="left:290px;top:98px;width:168px;text-align:center;font-size:12px;">2000年</span>
<div class="a hd" style="left:458px;top:93px;width:68px;height:19px"></div>
<span class="t" style="left:458px;top:98px;width:68px;text-align:center;font-size:12px;">10/6</span>
<div class="a" style="left:526px;top:93px;width:68px;height:19px;background:#0000ff;border-right:1px solid #000;border-bottom:1px solid #000"></div>
<span class="t" style="left:526px;top:95px;width:68px;text-align:center;font-size:12px;color:#fff">10/7</span>
<div class="a hd" style="left:594px;top:93px;width:68px;height:19px"></div>
<span class="t" style="left:594px;top:98px;width:68px;text-align:center;font-size:12px;">10/9</span>
<div class="a hd" style="left:662px;top:93px;width:68px;height:19px"></div>
<span class="t" style="left:662px;top:98px;width:68px;text-align:center;font-size:12px;">10/10</span>
<div class="a hd" style="left:730px;top:93px;width:68px;height:19px"></div>
<span class="t" style="left:730px;top:98px;width:68px;text-align:center;font-size:12px;">10/11</span>
<div class="a hd" style="left:798px;top:93px;width:68px;height:19px"></div>
<span class="t" style="left:798px;top:98px;width:68px;text-align:center;font-size:12px;">10/27</span>
<div class="a hd" style="left:866px;top:93px;width:68px;height:19px"></div>
<span class="t" style="left:866px;top:98px;width:68px;text-align:center;font-size:12px;">11/6</span>
<div class="a hd" style="left:934px;top:93px;width:7px;height:19px;border-right:0;box-shadow:none"></div>
<div class="a hd" style="left:290px;top:112px;width:168px;height:19px"></div>
<span class="t" style="left:290px;top:117px;width:170px;text-align:center;font-size:12px;letter-spacing:-.3px">(データ未取得期間)</span>
<div class="a hd" style="left:290px;top:131px;width:168px;height:20px;border-bottom-color:#848284"></div>
<span class="t" style="left:290px;top:136px;width:168px;text-align:center;font-size:12px;letter-spacing:.8px">(入院期間)</span>
<div class="a w" style="left:458px;top:112px;width:476px;height:18px;"></div>
<div class="a k" style="left:458px;top:130px;width:476px;height:1px;"></div>
<div class="a" style="left:458px;top:131px;width:476px;height:19px;background:#ffffde"></div>
<div class="a k" style="left:525px;top:112px;width:1px;height:38px;"></div>
<div class="a k" style="left:593px;top:112px;width:1px;height:38px;"></div>
<div class="a k" style="left:661px;top:112px;width:1px;height:38px;"></div>
<div class="a k" style="left:729px;top:112px;width:1px;height:38px;"></div>
<div class="a k" style="left:797px;top:112px;width:1px;height:38px;"></div>
<div class="a k" style="left:865px;top:112px;width:1px;height:38px;"></div>
<div class="a k" style="left:933px;top:112px;width:1px;height:38px;"></div>
<div class="a k" style="left:457px;top:131px;width:3px;height:20px;"></div>
<div class="a hd" style="left:934px;top:112px;width:7px;height:19px;border-right:0;box-shadow:none"></div>
<div class="a hd" style="left:934px;top:131px;width:7px;height:20px;border-right:0;box-shadow:none"></div>
<div class="a" style="left:290px;top:151px;width:634px;height:118px;background:#9ccfd6;clip-path:inset(0 0 0 -1px)">
<div class="a" style="left:0;top:0;width:168px;height:119px;background:#42aec6"></div>
<div class="a k" style="left:0;top:0px;width:634px;height:2px;z-index:2"></div>
<div class="a btn" style="left:1px;top:2px;width:23px;height:23px"></div>
<span class="t" style="left:0;top:7px;width:24px;text-align:center;font-size:11px;">+</span>
<span class="t" style="left:24px;top:7px;font-size:12px;">診察記事</span>
<span class="t" style="left:508px;top:7px;width:68px;text-align:center;font-size:13px;font-family:'IPAGothic','Liberation Sans',sans-serif">○</span>
<div class="a" style="left:0;top:25px;width:634px;height:2px;background:#000;border-top:1px solid #c6c3c6;z-index:2"></div>
<div class="a btn" style="left:1px;top:27px;width:23px;height:23px"></div>
<span class="t" style="left:0;top:32px;width:24px;text-align:center;font-size:11px;">+</span>
<span class="t" style="left:26px;top:32px;font-size:12px;">処方</span>
<span class="t" style="left:168px;top:32px;width:68px;text-align:center;font-size:13px;font-family:'IPAGothic','Liberation Sans',sans-serif">○</span>
<span class="t" style="left:236px;top:32px;width:68px;text-align:center;font-size:13px;font-family:'IPAGothic','Liberation Sans',sans-serif">○</span>
<span class="t" style="left:372px;top:32px;width:68px;text-align:center;font-size:13px;font-family:'IPAGothic','Liberation Sans',sans-serif">○</span>
<span class="t" style="left:508px;top:32px;width:68px;text-align:center;font-size:13px;font-family:'IPAGothic','Liberation Sans',sans-serif">○</span>
<div class="a" style="left:0;top:50px;width:634px;height:2px;background:#000;border-top:1px solid #c6c3c6;z-index:2"></div>
<div class="a btn" style="left:1px;top:52px;width:23px;height:23px"></div>
<span class="t" style="left:0;top:57px;width:24px;text-align:center;font-size:11px;">+</span>
<span class="t" style="left:26px;top:57px;font-size:12px;">注射</span>
<span class="t" style="left:168px;top:57px;width:68px;text-align:center;font-size:13px;font-family:'IPAGothic','Liberation Sans',sans-serif">○</span>
<div class="a" style="left:0;top:75px;width:634px;height:2px;background:#000;border-top:1px solid #c6c3c6;z-index:2"></div>
<div class="a btn" style="left:1px;top:77px;width:23px;height:23px"></div>
<span class="t" style="left:0;top:82px;width:24px;text-align:center;font-size:11px;">+</span>
<span class="t" style="left:26px;top:82px;font-size:12px;">検査オーダ</span>
<span class="t" style="left:168px;top:82px;width:68px;text-align:center;font-size:12px;">[△]</span>
<span class="t" style="left:304px;top:82px;width:68px;text-align:center;font-size:12px;">[△]</span>
<span class="t" style="left:372px;top:82px;width:68px;text-align:center;font-size:12px;">[<span style="font-family:'IPAGothic','Liberation Sans',sans-serif">○</span>]</span>
<span class="t" style="left:440px;top:82px;width:68px;text-align:center;font-size:13px;font-family:'IPAGothic','Liberation Sans',sans-serif">○</span>
<span class="t" style="left:508px;top:82px;width:68px;text-align:center;font-size:12px;">[◎]</span>
<span class="t" style="left:576px;top:82px;width:68px;text-align:center;font-size:12px;">△</span>
<div class="a" style="left:0;top:100px;width:634px;height:2px;background:#000;border-top:1px solid #c6c3c6;z-index:2"></div>
<div class="a btn" style="left:1px;top:102px;width:23px;height:23px"></div>
<span class="t" style="left:0;top:107px;width:24px;text-align:center;font-size:11px;">+</span>
<span class="t" style="left:26px;top:107px;font-size:12px;">検査結果</span>
<span class="t" style="left:168px;top:107px;width:68px;text-align:center;font-size:12px;">[◎]</span>
<span class="t" style="left:372px;top:107px;width:68px;text-align:center;font-size:12px;">[◎]</span>
<span class="t" style="left:440px;top:107px;width:68px;text-align:center;font-size:12px;">◎</span>
<span class="t" style="left:508px;top:107px;width:68px;text-align:center;font-size:12px;">[◎]</span>
<div class="a k" style="left:-1px;top:0;width:2px;height:119px"></div><div class="a" style="left:24px;top:0;width:1px;height:119px;background:repeating-linear-gradient(#000 0,#000 3px,#fff 3px,#fff 6px) 0 2px"></div><div class="a" style="left:25px;top:0;width:1px;height:119px;background:#d63c18"></div><div class="a w" style="left:168px;top:0;width:1px;height:119px"></div>
<div class="a" style="left:169px;top:0;width:1px;height:119px;background:repeating-linear-gradient(#000 0,#000 3px,#fff 3px,#fff 6px) 0 2px"></div>
<div class="a" style="left:237px;top:0;width:1px;height:119px;background:repeating-linear-gradient(#000 0,#000 3px,#fff 3px,#fff 6px) 0 2px"></div>
<div class="a" style="left:305px;top:0;width:1px;height:119px;background:repeating-linear-gradient(#000 0,#000 3px,#fff 3px,#fff 6px) 0 2px"></div>
<div class="a" style="left:373px;top:0;width:1px;height:119px;background:repeating-linear-gradient(#000 0,#000 3px,#fff 3px,#fff 6px) 0 2px"></div>
<div class="a" style="left:441px;top:0;width:1px;height:119px;background:repeating-linear-gradient(#000 0,#000 3px,#fff 3px,#fff 6px) 0 2px"></div>
<div class="a" style="left:509px;top:0;width:1px;height:119px;background:repeating-linear-gradient(#000 0,#000 3px,#fff 3px,#fff 6px) 0 2px"></div>
<div class="a" style="left:577px;top:0;width:1px;height:119px;background:repeating-linear-gradient(#000 0,#000 3px,#fff 3px,#fff 6px) 0 2px"></div>
</div>
<div class="a w" style="left:924px;top:151px;width:17px;height:118px;"></div>
<div class="a btn" style="left:924px;top:151px;width:17px;height:16px"></div>
<div class="a btn" style="left:924px;top:167px;width:17px;height:44px"></div>
<div class="a btn" style="left:924px;top:254px;width:17px;height:15px"></div>
<div class="a" style="left:928px;top:156px;width:0;height:0;border-left:4px solid transparent;border-right:4px solid transparent;border-bottom:4px solid #000"></div>
<div class="a" style="left:928px;top:260px;width:0;height:0;border-left:4px solid transparent;border-right:4px solid transparent;border-top:4px solid #000"></div>
<div class="a w" style="left:488px;top:271px;width:420px;height:18px;border-top:1px solid #848284"></div>
<div class="a btn" style="left:455px;top:271px;width:17px;height:18px"></div>
<div class="a btn" style="left:472px;top:271px;width:16px;height:18px"></div>
<div class="a btn" style="left:792px;top:271px;width:112px;height:18px"></div>
<div class="a btn" style="left:908px;top:271px;width:16px;height:18px"></div>
<div class="a btn" style="left:924px;top:271px;width:17px;height:18px"></div>
<div class="a" style="left:457px;top:275px;width:0;height:0;border-top:5px solid transparent;border-bottom:5px solid transparent;border-right:5px solid #000"></div><div class="a" style="left:463px;top:275px;width:0;height:0;border-top:5px solid transparent;border-bottom:5px solid transparent;border-right:5px solid #000"></div><div class="a" style="left:477px;top:275px;width:0;height:0;border-top:5px solid transparent;border-bottom:5px solid transparent;border-right:5px solid #000"></div><div class="a" style="left:914px;top:275px;width:0;height:0;border-top:5px solid transparent;border-bottom:5px solid transparent;border-left:5px solid #000"></div><div class="a" style="left:927px;top:275px;width:0;height:0;border-top:5px solid transparent;border-bottom:5px solid transparent;border-left:5px solid #000"></div><div class="a" style="left:933px;top:275px;width:0;height:0;border-top:5px solid transparent;border-bottom:5px solid transparent;border-left:5px solid #000"></div>
<!-- ===== progress note panel ===== -->
<div class="a" style="left:287px;top:292px;width:655px;height:192px;border:1px solid;border-color:#000 #c6c3c6 #fff #000;box-shadow:inset 1px 1px #fff;"></div>
<div class="a" style="left:290px;top:312px;width:651px;height:2px;border-top:1px solid #848284;border-bottom:1px solid #000;"></div>
<svg style="left:296px;top:296px" width="20" height="17" viewBox="8 37 20 17"><rect x="19.500" y="39.500" width="6.800" height="4.700" fill="#fff"/><rect x="19.500" y="39.500" width="6" height="3.500" fill="#00e700"/><path d="M19.500 39.300h6.500" stroke="#737573" stroke-width=".7"/><ellipse cx="11.600" cy="45" rx="2.500" ry="2.100" fill="#ff9c00"/><ellipse cx="12.900" cy="41.700" rx="3" ry="2.700" fill="#b52810"/><circle cx="13.200" cy="40.200" r="1.200" fill="#e7a56b"/><ellipse cx="18.500" cy="49.300" rx="5.600" ry="2.500" transform="rotate(22 18.500 49.300)" fill="#9cce18"/><circle cx="17.300" cy="48.600" r=".7" fill="#fff"/><circle cx="20.300" cy="49.900" r=".7" fill="#fff"/><path d="M10 47.300l-1.500 5" stroke="#fff" stroke-width="1"/><path d="M10 47.300l-1.500 5" stroke="#424142" stroke-width="1" stroke-dasharray="1.200 1.200"/></svg>
<div class="a w" style="left:318px;top:299px;width:1px;height:11px;"></div><div class="a" style="left:319px;top:299px;width:1px;height:11px;background:#848284"></div>
<span class="t" style="left:323px;top:297px;font-size:14px;letter-spacing:-2.79px">プログレスノート</span>
<div class="a" style="left:421px;top:299px;width:409px;height:9px;background:linear-gradient(#fff 0,#fff 2px,#848284 2px,#848284 3px,#c6c3c6 3px,#c6c3c6 6px,#fff 6px,#fff 8px,#848284 8px,#848284 9px);"></div>
<div class="a" style="left:833px;top:299px;width:64px;height:10px;background:linear-gradient(90deg,#9c9a9c 0,#a5a2a5 35%,#bdbabd 62%,#a5a2a5 82%,#9c9a9c 100%);"></div>
<div class="a btn" style="left:901px;top:296px;width:18px;height:16px"></div>
<div class="a" style="left:905px;top:299px;width:10px;height:9px;border:1px solid #737573;border-top:2px solid #3186ce;background:#dedbde"></div>
<div class="a btn" style="left:921px;top:296px;width:19px;height:16px"></div>
<svg style="left:924px;top:298px" width="13" height="12" viewBox="0 0 13 12"><path d="M2 1.500l9 9M11 1.500l-9 9" stroke="#f75152" stroke-width="2.400"/></svg>
<div class="a" style="left:290px;top:314px;width:38px;height:24px;border:1px solid;border-color:#fff #848284 #848284 #fff;"></div>
<div class="a" style="left:328px;top:314px;width:172px;height:24px;border:1px solid;border-color:#fff #848284 #848284 #fff;"></div>
<div class="a" style="left:500px;top:314px;width:208px;height:24px;border:1px solid;border-color:#fff #848284 #848284 #fff;"></div>
<div class="a" style="left:708px;top:314px;width:110px;height:24px;border:1px solid;border-color:#fff #848284 #848284 #fff;"></div>
<div class="a" style="left:818px;top:314px;width:117px;height:24px;border:1px solid;border-color:#fff #848284 #848284 #fff;"></div>
<div class="a grip" style="left:292px;top:317px;height:18px"></div>
<div class="a grip" style="left:331px;top:317px;height:18px"></div>
<div class="a grip" style="left:503px;top:317px;height:18px"></div>
<div class="a grip" style="left:711px;top:317px;height:18px"></div>
<div class="a grip" style="left:821px;top:317px;height:18px"></div>
<svg style="left:305px;top:319px" width="12" height="16" viewBox="0 0 12 16"><path d="M2.800 5c0-3.800 6.400-3.800 6.400 0c0 2.600-3.200 2.600-3.200 5.200" stroke="#000" stroke-width="4" fill="none" stroke-linecap="square"/><path d="M2.800 5c0-3.800 6.400-3.800 6.400 0c0 2.600-3.200 2.600-3.200 5.200" stroke="#ffef00" stroke-width="2" fill="none" stroke-linecap="square"/><rect x="4" y="11.800" width="4" height="3.700" fill="#000"/><rect x="5" y="12.700" width="2" height="1.900" fill="#ffef00"/></svg>
<span class="t" style="left:362px;top:320px;font-size:12px;letter-spacing:-.4px">循環器内科外来カルテ</span>
<div class="a dd" style="left:484px;top:325px"></div>
<div class="a" style="left:512px;top:316px;width:191px;height:20px;background:#fff;border:1px solid;border-color:#848284 #fff #fff #848284;box-shadow:inset 1px 1px #000,inset -1px -1px #c6c3c6;"></div>
<span class="t" style="left:515px;top:320px;font-size:12px;font-family:'Liberation Mono','IPAGothic',monospace;letter-spacing:-1.2px">2000/10/27</span>
<span class="t" style="left:587px;top:320px;font-size:12px;">循環器内科</span>
<div class="a btn" style="left:685px;top:318px;width:16px;height:16px"></div>
<div class="a dd" style="left:689px;top:324px;border-left-width:4px;border-right-width:4px;border-top-width:4px"></div>
<svg style="left:721px;top:317px" width="16" height="17" viewBox="0 0 16 17"><path d="M2 2h12v2l-4.500 11.500h-3l-4.500-11.500z" fill="#fff" stroke="#e71818" stroke-width="2"/></svg>
<svg style="left:745px;top:317px" width="16" height="17" viewBox="0 0 16 17"><path d="M6.500 2h3l4.500 11.500v2h-12v-2z" fill="#fff" stroke="#e71818" stroke-width="2"/></svg>
<svg style="left:768px;top:318px" width="16" height="16" viewBox="0 0 16 16"><rect x="0" y="0" width="4" height="4" fill="#1818e7"/><rect x="5" y="0" width="4" height="4" fill="#1818e7"/><rect x="11" y="0" width="4" height="4" fill="#1818e7"/><rect x="0" y="5" width="4" height="4" fill="#1818e7"/><rect x="5" y="5" width="4" height="4" fill="#1818e7"/><rect x="11" y="5" width="4" height="4" fill="#1818e7"/><rect x="0" y="11" width="4" height="4" fill="#5a5d8c"/><rect x="5" y="11" width="4" height="4" fill="#5a5d8c"/><rect x="11" y="11" width="4" height="4" fill="#5a5d8c"/></svg>
<svg style="left:791px;top:317px" width="16" height="17" viewBox="0 0 16 17"><g fill="#5a8c8c"><rect x="1" y="1" width="3" height="3"/><rect x="6" y="1" width="3" height="3"/><rect x="11" y="1" width="3" height="3"/></g><g fill="#18e718"><rect x="1" y="12" width="3" height="3"/><rect x="6" y="12" width="3" height="3"/><rect x="11" y="12" width="3" height="3"/><rect x="1" y="8" width="3" height="3"/><rect x="11" y="8" width="3" height="3"/></g><path d="M7.500 3v7M4.500 7.500l3 3.500 3-3.500z" stroke="#e71818" stroke-width="1.600" fill="#e71818"/></svg>
<svg style="left:828px;top:317px" width="18" height="18" viewBox="0 0 18 18"><rect x="7" y="4" width="10" height="13" fill="#ffffde" stroke="#848284" stroke-width=".8"/><path d="M9 7h6M9 9.500h6M9 12h6M9 14.500h6" stroke="#848284"/><path d="M1 1h6M1 3.500h6M1 6h5" stroke="#5a5d8c" stroke-width="1.200"/><path d="M3 8v6h3M4.500 11.500l3 2.500-3 2.500z" stroke="#1818e7" stroke-width="1.800" fill="#1818e7"/></svg>
<svg style="left:852px;top:318px" width="16" height="16" viewBox="0 0 16 16"><rect x="6" y="8" width="10" height="8" fill="#fff"/><path d="M1 1.500h7M1 4h7M1 6.500h7" stroke="#1818e7" stroke-width="1.300"/><path d="M2.500 9v5h3M4 12.500l2 1.500-2 1.500" stroke="#e71818" fill="none" stroke-width="1.200"/><path d="M8 10.500h6M8 13h6" stroke="#e71818" stroke-width="1.300"/></svg>
<svg style="left:875px;top:318px" width="18" height="16" viewBox="0 0 18 16"><path d="M1 5h5l1 1.500h6v8h-12z" fill="#8c8a18" stroke="#000" stroke-width=".9"/><path d="M1 14.500l3.500-6h12.500l-4 6z" fill="#dede39" stroke="#000" stroke-width=".9"/><path d="M10 3c2-2.500 5-2 6 1M16 4l-2.500-.5M16 4l.5-2.500" stroke="#000" fill="none" stroke-width="1"/></svg>
<svg style="left:899px;top:321px" width="14" height="12" viewBox="0 0 14 12"><path d="M1 1.500c3 1.500 8 5 11.500 9.500M12.500 1c-4 2-8 5.500-10.500 10" stroke="#e71818" stroke-width="2.400" fill="none"/></svg>
<div class="a k" style="left:289px;top:338px;width:652px;height:2px"></div>
<div class="a" style="left:289px;top:340px;width:635px;height:18px;background:#ffffc6;border-left:2px solid #000"></div>
<div class="a" style="left:289px;top:358px;width:635px;height:120px;background:#f7f7f7"></div>
<span class="t" style="left:292px;top:341px;font-size:15px;font-weight:bold;letter-spacing:1.66px">2000/10/27</span>
<span class="t" style="left:394px;top:340px;font-size:16px;font-weight:bold;letter-spacing:0.75px">循環器内科</span>
<span class="t" style="left:490px;top:340px;font-size:16px;font-weight:bold;letter-spacing:1.0px">松村</span>
<span class="t" style="left:537px;top:340px;font-size:16px;font-weight:bold;letter-spacing:1.0px">泰志</span>
<div class="a w" style="left:289px;top:359px;width:328px;height:119px;border-left:2px solid #000;border-right:1px solid #000"></div>
<div class="a" style="left:289px;top:359px;width:328px;height:44px;border:2px solid #000"></div>
<span class="t" style="left:297px;top:360px;font-size:12px;">&lt;S&gt;</span>
<span class="t" style="left:292px;top:372px;font-size:12px;letter-spacing:-0.25px">退院後condition good</span>
<span class="t" style="left:292px;top:384px;font-size:12px;letter-spacing:-0.12px">chest pain free</span>
<span class="t" style="left:297px;top:404px;font-size:12px;">&lt;O&gt;</span>
<div class="a" style="left:292px;top:419px;width:324px;height:1px;background:#c6c3c6"></div>
<span class="t" style="left:293px;top:421px;font-size:12px;letter-spacing:-0.69px">BP=148／68mmHg(右上腕、臥位)</span>
<div class="a" style="left:292px;top:437px;width:324px;height:1px;background:#c6c3c6"></div>
<span class="t" style="left:292px;top:439px;font-size:12px;letter-spacing:0.19px">脈拍数:72／分</span>
<span class="t" style="left:292px;top:451px;font-size:12px;letter-spacing:-0.09px">リズム:整</span>
<span class="t" style="left:292px;top:463px;font-size:12px;letter-spacing:-0.47px">大きさ:正常</span>
<div class="a w" style="left:620px;top:359px;width:304px;height:119px;border-left:1px solid #000;border-top:1px solid #000"></div>
<div class="a" style="left:621px;top:374px;width:303px;height:1px;background:#c6c3c6"></div>
<div class="a" style="left:621px;top:389px;width:303px;height:1px;background:#c6c3c6"></div>
<div class="a" style="left:621px;top:404px;width:303px;height:1px;background:#c6c3c6"></div>
<div class="a" style="left:621px;top:419px;width:303px;height:1px;background:#c6c3c6"></div>
<div class="a" style="left:621px;top:434px;width:303px;height:1px;background:#c6c3c6"></div>
<div class="a" style="left:621px;top:449px;width:303px;height:1px;background:#c6c3c6"></div>
<div class="a" style="left:621px;top:465px;width:303px;height:1px;background:#c6c3c6"></div>
<span class="t" style="left:640px;top:361px;font-size:12px;letter-spacing:-2.0px">処方</span>
<span class="t" style="left:667px;top:361px;font-size:12px;letter-spacing:1.0px">実施</span>
<span class="t" style="left:705px;top:361px;font-size:12px;letter-spacing:-0.19px">【2000/10/27】</span>
<span class="t" style="left:667px;top:376px;font-size:12px;letter-spacing:0.15px">シナール顆粒(1g／包)</span>
<span class="t" style="left:809px;top:376px;font-size:12px;">6</span>
<span class="t" style="left:819px;top:376px;font-size:12px;">包</span>
<span class="t" style="left:667px;top:391px;font-size:12px;letter-spacing:-0.64px">アリナミンF錠25mg</span>
<span class="t" style="left:791px;top:391px;font-size:12px;">6</span>
<span class="t" style="left:800px;top:391px;font-size:12px;">錠</span>
<span class="t" style="left:667px;top:406px;font-size:12px;letter-spacing:-0.13px">ガスター錠20mg</span>
<span class="t" style="left:777px;top:406px;font-size:12px;">1</span>
<span class="t" style="left:786px;top:406px;font-size:12px;">錠</span>
<span class="t" style="left:667px;top:421px;font-size:12px;letter-spacing:-0.73px">オイグルコン錠2．5mg</span>
<span class="t" style="left:806px;top:421px;font-size:12px;">4</span>
<span class="t" style="left:815px;top:421px;font-size:12px;">錠</span>
<span class="t" style="left:667px;top:436px;font-size:12px;letter-spacing:-0.06px">マーズレンーS顆粒(0．5g／包)</span>
<span class="t" style="left:856px;top:436px;font-size:12px;">3</span>
<span class="t" style="left:866px;top:436px;font-size:12px;">包</span>
<span class="t" style="left:667px;top:451px;font-size:12px;letter-spacing:-0.54px">ニトロール錠5mg</span>
<span class="t" style="left:779px;top:451px;font-size:12px;">3</span>
<span class="t" style="left:789px;top:451px;font-size:12px;">錠</span>
<span class="t" style="left:667px;top:466px;font-size:12px;letter-spacing:-0.73px">ベイスン錠0．2mg</span>
<span class="t" style="left:784px;top:466px;font-size:12px;">3</span>
<span class="t" style="left:793px;top:466px;font-size:12px;">錠</span>
<div class="a w" style="left:924px;top:339px;width:17px;height:141px;"></div>
<div class="a btn" style="left:924px;top:339px;width:17px;height:16px"></div>
<div class="a btn" style="left:924px;top:355px;width:17px;height:57px"></div>
<div class="a btn" style="left:924px;top:466px;width:17px;height:14px"></div>
<div class="a" style="left:928px;top:344px;width:0;height:0;border-left:4px solid transparent;border-right:4px solid transparent;border-bottom:4px solid #000"></div>
<div class="a" style="left:928px;top:471px;width:0;height:0;border-left:4px solid transparent;border-right:4px solid transparent;border-top:4px solid #000"></div>
<!-- ===== bottom editors ===== -->
<div class="a" style="left:287px;top:486px;width:655px;height:1px;background:#000"></div>
<div class="a w" style="left:288px;top:487px;width:654px;height:1px;"></div>
<div class="a" style="left:287px;top:486px;width:2px;height:202px;background:#000"></div>
<div class="a" style="left:292px;top:487px;width:39px;height:25px;border:1px solid;border-color:#fff #848284 #848284 #fff;"></div>
<div class="a" style="left:331px;top:487px;width:280px;height:25px;border:1px solid;border-color:#fff #848284 #848284 #fff;"></div>
<div class="a" style="left:292px;top:512px;width:283px;height:24px;border:1px solid;border-color:#fff #848284 #848284 #fff;"></div>
<div class="a" style="left:575px;top:512px;width:36px;height:24px;border:1px solid;border-color:#fff #848284 #848284 #fff;"></div>
<div class="a grip" style="left:295px;top:490px;height:18px"></div>
<div class="a grip" style="left:334px;top:490px;height:18px"></div>
<div class="a grip" style="left:295px;top:515px;height:18px"></div>
<div class="a grip" style="left:577px;top:515px;height:18px"></div>
<svg style="left:308px;top:492px" width="12" height="16" viewBox="0 0 12 16"><path d="M2.800 5c0-3.800 6.400-3.800 6.400 0c0 2.600-3.200 2.600-3.200 5.200" stroke="#000" stroke-width="4" fill="none" stroke-linecap="square"/><path d="M2.800 5c0-3.800 6.400-3.800 6.400 0c0 2.600-3.200 2.600-3.200 5.200" stroke="#ffef00" stroke-width="2" fill="none" stroke-linecap="square"/><rect x="4" y="11.800" width="4" height="3.700" fill="#000"/><rect x="5" y="12.700" width="2" height="1.900" fill="#ffef00"/></svg>
<svg style="left:346px;top:492px" width="10" height="16" viewBox="0 0 10 16"><path d="M2 1l5 9M8 1l-5 9" stroke="#000" stroke-width="1.100"/><path d="M3 10c-2 0-2 4 0 4M7 10c2 0 2 4 0 5" stroke="#1818a5" fill="none" stroke-width="1.100"/></svg>
<svg style="left:367px;top:492px" width="15" height="16" viewBox="0 0 15 16"><path d="M1 1h6v12h-6zM1 4h6M1 7h6M1 10h6" stroke="#000" fill="none" stroke-width="1.200"/><path d="M8 4h5M8 7h6M8 10h5" stroke="#10108c" stroke-width="1.600"/></svg>
<svg style="left:390px;top:491px" width="16" height="17" viewBox="0 0 16 17"><rect x="1" y="3" width="10" height="12" fill="#8c8a18" stroke="#000"/><rect x="3.500" y="1" width="5" height="3" fill="#c6c3c6" stroke="#000" stroke-width=".8"/><path d="M8 7h6v9h-6zM9 10h4M9 12.500h4" fill="#fff" stroke="#10108c" stroke-width="1.200"/></svg>
<svg style="left:415px;top:494px" width="13" height="11" viewBox="0 0 13 11"><path d="M3 5c2-4 8-3 8 1c0 2-2 3-4 3" stroke="#1818a5" stroke-width="1.500" fill="none"/><path d="M1 2l1.500 5 4-2z" fill="#1818a5"/></svg>
<svg style="left:437px;top:493px" width="15" height="13" viewBox="0 0 15 13"><path d="M1 1c3 2 8 6 12 11M12 1c-4 2-8 6-11 11" stroke="#e71818" stroke-width="2.600" fill="none"/></svg>
<svg style="left:459px;top:492px" width="16" height="16" viewBox="0 0 16 16"><path d="M8 0l8 8h-5v8h-6v-8h-5z" fill="#000"/></svg>
<svg style="left:482px;top:492px" width="16" height="16" viewBox="0 0 16 16"><path d="M8 16l8-8h-5v-8h-6v8h-5z" fill="#000"/></svg>
<svg style="left:306px;top:515px" width="17" height="16" viewBox="0 0 17 16"><rect x="0" y="3" width="14" height="13" fill="#a5a2a5"/><path d="M0 1.500h14" stroke="#10108c" stroke-width="2"/><path d="M2 6h10M2 9h7M2 12h10" stroke="#000" stroke-width="1.200"/><path d="M17 9.500h-5M13.500 6.500l-3.500 3 3.500 3z" stroke="#e71818" stroke-width="2" fill="#e71818"/></svg>
<svg style="left:329px;top:515px" width="16" height="16" viewBox="0 0 16 16"><rect x="0" y="3" width="15" height="13" fill="#a5a2a5"/><path d="M0 1.500h15" stroke="#10108c" stroke-width="2"/><path d="M2 6h11M4 9h9M4 12h9" stroke="#000" stroke-width="1.200"/></svg>
<div class="a dd" style="left:351px;top:524px"></div>
<svg style="left:364px;top:515px" width="13" height="16" viewBox="0 0 13 16"><rect x="0" y="0" width="13" height="16" fill="#fff"/><path d="M2 3h9M2 5.500h9M2 8h9M2 10.500h4M2 13h4" stroke="#a5a2a5"/><path d="M11 10.500c-3-1.500-4 3.500 0 2.500" stroke="#000" fill="none" stroke-width="1.300"/></svg>
<div class="a dd" style="left:385px;top:524px"></div>
<svg style="left:397px;top:514px" width="15" height="18" viewBox="0 0 15 18"><path d="M1 1h8l4 4v11h-12z" fill="#efefce" stroke="#a5a2a5" stroke-width=".8"/><path d="M7 2l-1.500 8M10 4v7" stroke="#e71818" stroke-width="2.400"/><path d="M5 10l-3 4M1 11.500l1 3 3-.5z" stroke="#18c618" stroke-width="1.600" fill="#18c618"/><path d="M1 17h12" stroke="#000" stroke-width="1"/></svg>
<div class="a dd" style="left:419px;top:524px"></div>
<div class="a sep" style="left:431px;top:515px;height:19px"></div>
<svg style="left:439px;top:514px" width="15" height="17" viewBox="0 0 15 17"><rect x="3" y="3" width="12" height="14" fill="#fff"/><path d="M6 5h7M6 7.500h7M6 10h7M6 12.500h3M6 15h3" stroke="#a5a2a5"/><path d="M13 12c-3-1.500-4 3.500 0 2.500" stroke="#000" fill="none" stroke-width="1.300"/><path d="M1 7v-6h2.500c2 0 2 3 0 3h-2.500M3 4l2 3" stroke="#1818e7" fill="none" stroke-width="1.300"/></svg>
<div class="a dd" style="left:461px;top:524px"></div>
<svg style="left:473px;top:514px" width="15" height="18" viewBox="0 0 15 18"><path d="M1 1h8l4 4v11h-12z" fill="#efefce" stroke="#a5a2a5" stroke-width=".8"/><path d="M7 2l-1.500 8M10 4v7" stroke="#e71818" stroke-width="2.400"/><path d="M5 10l-3 4M1 11.500l1 3 3-.5z" stroke="#18c618" stroke-width="1.600" fill="#18c618"/><path d="M1 17h12" stroke="#000" stroke-width="1"/><path d="M0 6v-6h2.500c2 0 2 3 0 3h-2.500M2 3l2 3" stroke="#1818e7" fill="none" stroke-width="1.300"/></svg>
<div class="a dd" style="left:495px;top:524px"></div>
<svg style="left:506px;top:515px" width="18" height="16" viewBox="0 0 18 16"><path d="M1 5h5l1 1.500h6v8h-12z" fill="#8c8a18" stroke="#000" stroke-width=".9"/><path d="M1 14.500l3.500-6h12.500l-4 6z" fill="#dede39" stroke="#000" stroke-width=".9"/><path d="M10 3c2-2.500 5-2 6 1M16 4l-2.500-.5M16 4l.5-2.500" stroke="#000" fill="none" stroke-width="1"/></svg>
<div class="a sep" style="left:530px;top:515px;height:19px"></div>
<svg style="left:538px;top:516px" width="16" height="14" viewBox="0 0 16 14"><path d="M1 3h5l1 1.500h8v9h-14z" fill="#efe784" stroke="#8c8a5a" stroke-width="1"/></svg>
<div class="a dd" style="left:560px;top:524px"></div>
<svg style="left:587px;top:516px" width="15" height="16" viewBox="0 0 15 16"><rect x="4" y="6" width="10" height="10" fill="#a5a2a5"/><rect x="6" y="8" width="7" height="6" fill="#e71818"/><rect x="1" y="1" width="2.500" height="2.500" fill="#e71818"/><path d="M5 2h4v3M7.500 4l1.500 1.500 1.500-1.500" stroke="#1818e7" fill="none" stroke-width="1.100"/></svg>
<div class="a w" style="left:289px;top:536px;width:325px;height:150px;border-top:1px solid #000;"></div><div class="a" style="left:614px;top:536px;width:1px;height:152px;background:#848284"></div>
<div class="a k" style="left:287px;top:686px;width:327px;height:1px;"></div>
<div class="a w" style="left:615px;top:487px;width:2px;height:201px;"></div>
<div class="a w" style="left:611px;top:488px;width:1px;height:48px;"></div>
<div class="a" style="left:618px;top:487px;width:2px;height:201px;background:#181818"></div>

<svg style="left:624px;top:491px" width="12" height="16" viewBox="0 0 12 16"><path d="M2.800 5c0-3.800 6.400-3.800 6.400 0c0 2.600-3.200 2.600-3.200 5.200" stroke="#000" stroke-width="4" fill="none" stroke-linecap="square"/><path d="M2.800 5c0-3.800 6.400-3.800 6.400 0c0 2.600-3.200 2.600-3.200 5.200" stroke="#ffef00" stroke-width="2" fill="none" stroke-linecap="square"/><rect x="4" y="11.800" width="4" height="3.700" fill="#000"/><rect x="5" y="12.700" width="2" height="1.900" fill="#ffef00"/></svg>
<svg style="left:645px;top:490px" width="16" height="17" viewBox="0 0 16 17"><rect width="16" height="17" fill="#fff"/><circle cx="8" cy="5" r="4" fill="#212021"/><circle cx="8" cy="8" r="3" fill="#f7e75a" stroke="#000" stroke-width=".7"/><circle cx="8" cy="3.500" r="1.200" fill="#fff"/><path d="M2 16c0-5 12-5 12 0" fill="#fff" stroke="#000"/><path d="M6 13l2 3 2-3" fill="#18a58c"/></svg>
<svg style="left:668px;top:490px" width="15" height="16" viewBox="0 0 15 16"><rect x="4" y="6" width="10" height="10" fill="#a5a2a5"/><rect x="6" y="8" width="7" height="6" fill="#e71818"/><rect x="1" y="1" width="2.500" height="2.500" fill="#e71818"/><path d="M5 2h4v3M7.500 4l1.500 1.500 1.500-1.500" stroke="#1818e7" fill="none" stroke-width="1.100"/></svg>
<svg style="left:692px;top:490px" width="15" height="16" viewBox="0 0 15 16"><rect x="3" y="7" width="12" height="8" fill="#a5a2a5"/><path d="M5 11.500h8" stroke="#000" stroke-width="2" stroke-dasharray="2 1"/><rect x="8" y="7.500" width="2" height="2" fill="#e71818"/><rect x="1" y="1" width="2.500" height="2.500" fill="#e71818"/><path d="M5 2h4v3M7.500 4l1.500 1.500 1.500-1.500" stroke="#1818e7" fill="none" stroke-width="1.100"/></svg>
<div class="a w" style="left:621px;top:514px;width:315px;height:167px;border:1px solid;border-color:#848284 #e7e7e7 #e7e7e7 #848284;box-shadow:inset 1px 1px #000"></div>
<!-- ===== right menu ===== -->
<div class="a" style="left:942px;top:85px;width:80px;height:538px;background:#848284"></div>
<div class="a btn" style="left:942px;top:35px;width:40px;height:34px"></div>
<div class="a btn" style="left:982px;top:35px;width:40px;height:34px"></div>
<div class="a btn" style="left:942px;top:69px;width:80px;height:16px"></div>
<span class="t" style="left:942px;top:71px;width:80px;text-align:center;font-size:12px;letter-spacing:-1.5px">メイン</span>
<svg style="left:942px;top:35px" width="40" height="34" viewBox="942 35 40 34"><path d="M946 58.500h12.500v-14.500h3.500v19h-16z" fill="#8c8a8c"/><rect x="945.500" y="42.500" width="13" height="16" fill="#fff"/><path d="M947 45h10" stroke="#8c8a8c" stroke-width="2"/><path d="M947 48h10M947 50.500h10M947 53h10M947 55.500h10" stroke="#8c8a8c" stroke-width="1.200"/><path d="M963.500 53.500l5 5.500 10.500-11" stroke="#fff" stroke-width="1.600" fill="none"/><path d="M962.500 52.500l5 5.500 10.500-11" stroke="#8c8a8c" stroke-width="2.200" fill="none"/></svg>
<svg style="left:982px;top:35px" width="40" height="34" viewBox="982 35 40 34"><path d="M991 41.0v7M987.500 44.5l3.500 4 3.500-4M991 48.6v7M987.500 52.1l3.500 4 3.500-4M991 56.2v7M987.500 59.7l3.500 4 3.500-4" stroke="#0000ff" stroke-width="1.600" fill="none"/><path d="M999.500 61.500h15v-18" stroke="#000094" stroke-width="1.200" fill="none"/><path d="M999.500 59.700h13.300v-16.200" stroke="#00ffff" stroke-width="2.600" fill="none"/><rect x="998" y="41.500" width="13.500" height="16.500" fill="#fff"/><path d="M999.500 58h12v-16" stroke="#000" stroke-width="1" fill="none"/><path d="M999.500 44h9.500" stroke="#8c8a8c" stroke-width="2"/><path d="M999.500 47h9.500M999.500 49.500h9.500M999.500 52h9.500M999.500 54.500h9.500" stroke="#8c8a8c" stroke-width="1.200"/></svg>
<span class="t" style="left:964px;top:98px;width:58px;overflow:hidden;font-size:11px;color:#fff;letter-spacing:-.2px">COMMUNIC</span>
<span class="t" style="left:964px;top:110px;font-size:11px;color:#fff;">起動</span>
<span class="t" style="left:964px;top:131px;font-size:13px;color:#fff;letter-spacing:-.5px">Do ALL</span>
<span class="t" style="left:964px;top:157px;font-size:13px;color:#fff;letter-spacing:-.5px">Do <span style="font-size:12px">処方</span></span>
<span class="t" style="left:964px;top:184px;font-size:12px;color:#fff;letter-spacing:-0.3px">処方</span>
<span class="t" style="left:964px;top:210px;font-size:12px;color:#fff;letter-spacing:-0.3px">検査</span>
<span class="t" style="left:964px;top:236px;font-size:12px;color:#fff;letter-spacing:-0.3px">注射</span>
<span class="t" style="left:964px;top:262px;font-size:12px;color:#fff;letter-spacing:-0.3px">画像生理</span>
<span class="t" style="left:964px;top:288px;font-size:12px;color:#fff;letter-spacing:-0.3px">処置</span>
<span class="t" style="left:964px;top:314px;font-size:12px;color:#fff;letter-spacing:-0.3px">食事</span>
<span class="t" style="left:964px;top:340px;font-size:12px;color:#fff;letter-spacing:-0.3px">検査結果</span>
<span class="t" style="left:964px;top:366px;font-size:12px;color:#fff;letter-spacing:-1.25px">画像レポー</span>
<span class="t" style="left:964px;top:392px;font-size:12px;color:#fff;letter-spacing:-2.67px">フォルダ</span>
<span class="t" style="left:964px;top:418px;font-size:12px;color:#fff;letter-spacing:-0.3px">患者基本</span>
<span class="t" style="left:964px;top:444px;font-size:12px;color:#fff;letter-spacing:-0.3px">予約</span>
<span class="t" style="left:964px;top:470px;font-size:12px;color:#fff;letter-spacing:-0.3px">病名</span>
<span class="t" style="left:964px;top:496px;font-size:12px;color:#fff;letter-spacing:-0.3px">入院基本</span>
<span class="t" style="left:964px;top:522px;font-size:12px;color:#fff;letter-spacing:-1.25px">その他</span>
<span class="t" style="left:964px;top:548px;font-size:12px;color:#fff;letter-spacing:-1.0px">オーダ起動</span>
<svg style="left:944px;top:96px" width="18" height="18" viewBox="0 0 18 18"><rect width="17" height="16" fill="#0000e7"/><path d="M3 5l7-2 4 3-1 7-7 1-3-4z" fill="#fff" stroke="#000" stroke-width=".8"/><rect x="6" y="6" width="8" height="5" fill="#5ae7c6" stroke="#000" stroke-width=".6"/><path d="M5 7l5 5" stroke="#e7c618" stroke-width="1.500"/></svg>
<span class="t" style="left:944px;top:129px;font-size:9px;font-weight:bold;color:#1010c6;line-height:8px;white-space:normal;width:18px;letter-spacing:-.5px">DO ALL</span>
<span class="t" style="left:944px;top:156px;font-size:6px;font-weight:bold;color:#1010c6;letter-spacing:-.4px">DOALL</span>
<svg style="left:944px;top:161px" width="18" height="12" viewBox="0 0 18 12"><path d="M3 6l7-4" stroke="#fff" stroke-width="5" stroke-linecap="round"/><path d="M9 7l5 2" stroke="#e71818" stroke-width="3.500" stroke-linecap="round"/><path d="M13 9l2 .8" stroke="#ffef18" stroke-width="3.500" stroke-linecap="round"/></svg>
<svg style="left:944px;top:182px" width="18" height="18" viewBox="0 0 18 18"><path d="M4 13l9-9" stroke="#ffef18" stroke-width="6" stroke-linecap="round"/><path d="M4 13l3.500-3.500" stroke="#e71818" stroke-width="6" stroke-linecap="round"/></svg>
<svg style="left:944px;top:207px" width="18" height="18" viewBox="0 0 18 18"><path d="M2.500 1v15M5.500 3v13" stroke="#e71818" stroke-width="2"/><path d="M1 1h3M4 3h3" stroke="#fff"/><path d="M8 8h8v8h-8z" fill="#18c6e7" stroke="#fff" stroke-width="1"/><path d="M8 8h8" stroke="#fff" stroke-width="2"/></svg>
<svg style="left:944px;top:233px" width="18" height="18" viewBox="0 0 18 18"><path d="M3 3l10 10" stroke="#c6c3c6" stroke-width="6" stroke-linecap="round"/><path d="M5 5l6 6" stroke="#18c6e7" stroke-width="3.500"/><path d="M13 13l3 3M1 1l3 3" stroke="#e7e7e7" stroke-width="1.300"/></svg>
<svg style="left:944px;top:259px" width="18" height="18" viewBox="0 0 18 18"><rect x="0" y="1" width="17" height="14" fill="#c6c3c6"/><rect x="1" y="2" width="7" height="12" fill="#424142"/><path d="M3 3v10M5 5v8M2 8h5" stroke="#fff" stroke-width=".8"/><rect x="9" y="6" width="7" height="6" fill="#189c7b" stroke="#000" stroke-width=".6"/><path d="M0 16h17" stroke="#000"/></svg>
<svg style="left:944px;top:285px" width="18" height="18" viewBox="0 0 18 18"><path d="M2 16l9-9" stroke="#424142" stroke-width="2"/><path d="M10 8l4-5 2 2-5 4z" fill="#a5a2a5" stroke="#e7e7e7" stroke-width=".6"/></svg>
<svg style="left:944px;top:311px" width="18" height="18" viewBox="0 0 18 18"><ellipse cx="9" cy="6" rx="8" ry="3.500" fill="#fff" stroke="#000" stroke-width=".7"/><ellipse cx="7" cy="4" rx="3.500" ry="2.500" fill="#1010a5"/><ellipse cx="8" cy="12" rx="6" ry="3" fill="#fff" stroke="#000" stroke-width=".7"/><path d="M3 12h5" stroke="#e71818" stroke-width="2.500"/><path d="M9 12.500h5" stroke="#18a518" stroke-width="2"/><path d="M12 5l5 2" stroke="#e79c18" stroke-width="1.500"/></svg>
<svg style="left:944px;top:337px" width="18" height="18" viewBox="0 0 18 18"><path d="M1.500 0v15.500h16" stroke="#000" fill="none" stroke-dasharray="1 1"/><path d="M3 12l3-3 3 3 3-6 3-3" stroke="#e71818" fill="none" stroke-width="1.200"/><path d="M8 10c2-6 6-8 9-5" stroke="#3139e7" fill="none" stroke-width="1.200"/></svg>
<svg style="left:944px;top:363px" width="18" height="18" viewBox="0 0 18 18"><path d="M2 4h14v13h-14z" fill="#212021"/><path d="M4 2h3v3h-3zM11 2h3v3h-3z" fill="#e7de5a"/><path d="M4 8h2v8h-2zM7 8h1.500v8h-1.500zM10 8h2v8h-2zM13 8h1.500v8h-1.500z" fill="#fff"/><path d="M2 7h14" stroke="#fff"/></svg>
<svg style="left:944px;top:389px" width="18" height="18" viewBox="0 0 18 18"><path d="M5 1v16" stroke="#212021" stroke-width="1.500"/><path d="M6 2h8v4h-8z" fill="#ffffc6" stroke="#5a5d5a" stroke-width=".6"/><path d="M6 9h6M6 13h6" stroke="#e7de5a" stroke-width="2"/><path d="M3 9h2M3 13h2" stroke="#e7e7e7"/></svg>
<svg style="left:944px;top:415px" width="18" height="18" viewBox="0 0 18 18"><path d="M7 6h5v10h-5z" fill="#e7de5a" stroke="#000" stroke-width=".8"/><circle cx="9.500" cy="4" r="2.500" fill="#e7de5a" stroke="#000" stroke-width=".8"/><path d="M1 5h6M12 5h5M2 3v5M16 2v5" stroke="#e71818" stroke-width="2"/><path d="M1 8h5M13 8h4" stroke="#212021" stroke-width="1.500"/></svg>
<svg style="left:944px;top:441px" width="18" height="18" viewBox="0 0 18 18"><rect x="0" y="1" width="17" height="15" fill="#3139e7"/><rect x="1.500" y="4" width="14" height="10.500" fill="#dedbde"/><path d="M2 7h13M2 10h13M5 4v10M8.500 4v10M12 4v10" stroke="#3139e7" stroke-width=".8"/><path d="M8 12l8-9" stroke="#18e718" stroke-width="2.600"/><path d="M6 14l2-2" stroke="#000" stroke-width="1.500"/><path d="M3 12h3" stroke="#e71818" stroke-width="1.500"/></svg>
<svg style="left:944px;top:467px" width="18" height="18" viewBox="0 0 18 18"><path d="M9 1v16M3 5h12M4 5c0 5 2 7 5 7s5-2 5-7M6 15h6M5 8l-3 3M13 8l3 3" stroke="#e718e7" stroke-width="1.600" fill="none"/><circle cx="9" cy="3" r="2" fill="#e718e7"/></svg>
<span class="t" style="left:944px;top:494px;font-size:8.500px;color:#1818e7;line-height:9px;white-space:normal;width:18px;letter-spacing:-.5px">入院基本</span>
<svg style="left:944px;top:519px" width="18" height="18" viewBox="0 0 18 18"><path d="M1 4h11v9h-11z" fill="#fff" stroke="#000" stroke-width=".8"/><rect x="2.500" y="5.500" width="7" height="5" fill="#189c9c"/><path d="M0 15h14" stroke="#fff" stroke-width="2"/><path d="M0 16.500h14" stroke="#000"/><rect x="13" y="1" width="4" height="15" fill="#fff" stroke="#000" stroke-width=".6"/><rect x="14" y="2" width="2.500" height="7" fill="#18c6e7"/></svg>
<svg style="left:944px;top:545px" width="18" height="18" viewBox="0 0 18 18"><path d="M1 4h11v9h-11z" fill="#fff" stroke="#000" stroke-width=".8"/><rect x="2.500" y="5.500" width="7" height="5" fill="#189c9c"/><path d="M0 15h14" stroke="#fff" stroke-width="2"/><path d="M0 16.500h14" stroke="#000"/><rect x="13" y="1" width="4" height="15" fill="#fff" stroke="#000" stroke-width=".6"/><rect x="14" y="2" width="2.500" height="7" fill="#18c6e7"/></svg>
<div class="a btn" style="left:942px;top:623px;width:80px;height:64px"></div>
<svg style="left:968px;top:626px" width="26" height="31" viewBox="0 0 28 33"><path d="M1 33c0-10 4-12 8-13h10c4 1 8 3 8 13z" fill="#fff" stroke="#000"/><path d="M10 20l4 6 4-6z" fill="#18a58c"/><ellipse cx="14" cy="14" rx="6" ry="7" fill="#f7e75a" stroke="#000" stroke-width=".8"/><path d="M6 10c0-10 16-10 16 0c-4-3-12-3-16 0z" fill="#212021"/><circle cx="14" cy="5" r="2.500" fill="#fff" stroke="#000" stroke-width=".8"/><path d="M11 13h2M15 13h2M12.500 18h3" stroke="#000" stroke-width="1"/><path d="M7 24v9M21 24v9M9 27h4" stroke="#848284"/></svg>
<span class="t" style="left:942px;top:657px;width:80px;text-align:center;font-size:13px;letter-spacing:-.7px">オーダ画面</span>
<span class="t" style="left:942px;top:670px;width:80px;text-align:center;font-size:13px;">表示</span>
</body>
</html>
